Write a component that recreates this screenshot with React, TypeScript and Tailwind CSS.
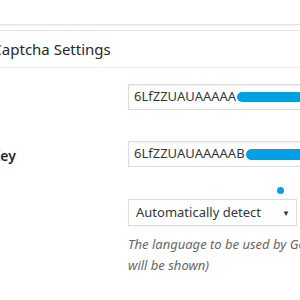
import React from "react";

export default function App() {
  const font = { fontFamily: '"Noto Sans", "Open Sans", sans-serif' };
  return (
    <div className="w-[300px] h-[300px] overflow-hidden bg-white text-[#32373c]" style={font}>
      <div className="h-[25px] border-b border-[#e5e5e5] shadow-[0_1px_1px_rgba(0,0,0,0.04)]" />
      <div className="mt-[5px] border-t border-[#e5e5e5]">
        <div className="h-[37px] border-b border-[#eeeeee] flex items-center">
          <h2 className="ml-[-22px] text-[15px] leading-none text-[#23282d] whitespace-nowrap">reCaptcha Settings</h2>
        </div>
        <div className="ml-[-55px] w-[520px] pt-[16px]">
          <div className="flex">
            <div className="w-[183px] shrink-0 pt-[5px] text-[14px] font-semibold text-[#23282d] whitespace-nowrap">Site</div>
            <div className="w-[260px] h-[26px] border border-[#dddddd] shadow-[inset_0_1px_2px_rgba(0,0,0,0.07)] flex items-center px-[5px] text-[13px] text-[#32373c] whitespace-nowrap">
              6LfZZUAUAAAAA
              <span className="ml-[1px] inline-block h-[10px] w-[80px] rounded-l-full bg-[#00a1e4]" />
            </div>
          </div>
          <div className="flex mt-[31px]">
            <div className="w-[183px] shrink-0 pt-[4px] text-[14px] font-semibold text-[#23282d] whitespace-nowrap">Secret Key</div>
            <div className="w-[260px] h-[26px] border border-[#dddddd] shadow-[inset_0_1px_2px_rgba(0,0,0,0.07)] flex items-center px-[5px] text-[13px] text-[#32373c] whitespace-nowrap">
              6LfZZUAUAAAAAB
              <span className="ml-[1px] inline-block h-[11px] w-[70px] rounded-l-full bg-[#00a1e4]" />
            </div>
          </div>
          <div className="flex mt-[17px]">
            <div className="w-[183px] shrink-0 pt-[21px] text-[14px] font-semibold text-[#23282d] whitespace-nowrap">Lang</div>
            <div>
              <div className="h-[15px] flex items-start pt-[3px]">
                <span className="ml-[149px] block w-[7px] h-[7px] rounded-full bg-[#00a1e4]" />
              </div>
              <div className="w-[169px] h-[27px] border border-[#dddddd] shadow-[0_1px_1px_rgba(0,0,0,0.04)] flex items-center justify-between pl-[7px] pr-[6px] text-[13px] text-[#32373c] whitespace-nowrap">
                <span>Automatically detect</span>
                <span className="text-[8px] text-[#32373c]">▼</span>
              </div>
              <p className="mt-[8px] text-[13px] italic leading-[21px] text-[#666666] whitespace-nowrap">
                The language to be used by Google reCaptcha (if automatically detect, the user language
                <br />
                will be shown)
              </p>
            </div>
          </div>
        </div>
      </div>
    </div>
  );
}
